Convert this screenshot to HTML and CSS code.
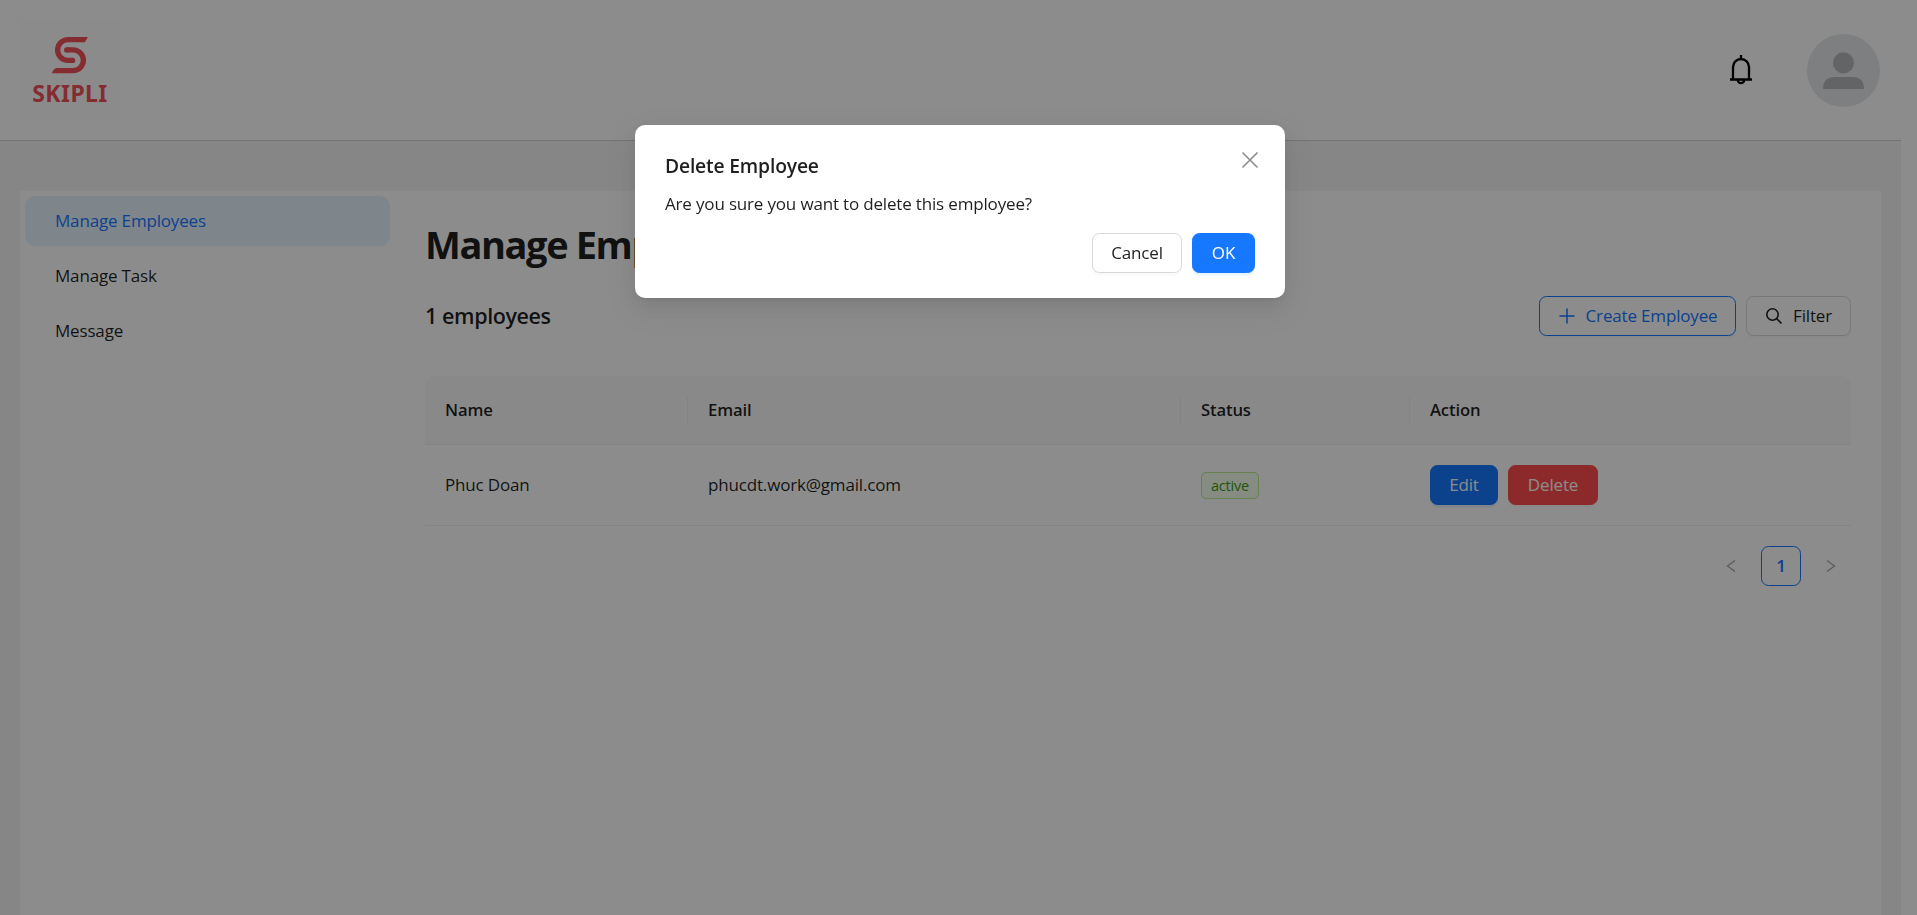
FILE: index.html
```html
<!DOCTYPE html>
<html lang="en">
<head>
<meta charset="utf-8">
<title>Manage Employees</title>
<link rel="stylesheet" href="styles.css">
</head>
<body>
<div class="page">
  <header class="header">
    <div class="logo">
      <svg class="logo-mark" viewBox="0 0 114 112" fill="none">
        <path d="M103 8H51a31.5 31.5 0 0 0 0 63h14M47 39h19a31.5 31.5 0 0 1 0 63H14" stroke="#f05158" stroke-width="16"/>
        <circle cx="65" cy="71" r="8" fill="#f05158"/><circle cx="47" cy="39" r="8" fill="#f05158"/>
        <path d="M94 0h17q-5 14-17 16zM18 94Q6 96 2 110h16z" fill="#f05158"/>
      </svg>
      <span class="logo-text">SKIPLI</span>
    </div>
    <div class="header-tools">
      <svg class="bell" viewBox="0 0 24 32" fill="none" stroke="#000" stroke-width="2.300">
        <path d="M12 1v4M4 25.500V13a8 8 0 0 1 16 0v12.500M1 25.500h22M8.800 26a3.200 3.200 0 0 0 6.400 0"/>
      </svg>
      <svg class="avatar" viewBox="0 0 73 73">
        <circle cx="36.500" cy="36.500" r="36.500" fill="#e3e7ea"/>
        <circle cx="36.500" cy="28.800" r="10.500" fill="#b4b7b9"/>
        <path d="M16 55q0-12 12-12h17q12 0 12 12z" fill="#b4b7b9"/>
      </svg>
    </div>
  </header>
  <main class="main">
    <nav class="nav">
      <a class="nav-item nav-item-active">Manage Employees</a>
      <a class="nav-item">Manage Task</a>
      <a class="nav-item">Message</a>
    </nav>
    <section class="content">
      <h1 class="title">Manage Employees</h1>
      <div class="toolbar">
        <h2 class="count">1 employees</h2>
        <div class="actions">
          <button class="btn btn-outline"><svg class="icon" viewBox="0 0 18 18" fill="none" stroke="currentColor" stroke-width="1.500"><path d="M9 1.500v15M1.500 9h15"/></svg>Create Employee</button>
          <button class="btn"><svg class="icon" viewBox="0 0 18 18" fill="none" stroke="currentColor" stroke-width="1.600"><circle cx="7.500" cy="7.500" r="5.700"/><path d="M11.500 11.500l5 5"/></svg>Filter</button>
        </div>
      </div>
      <div class="table">
        <div class="row head"><div class="cell">Name</div><div class="cell">Email</div><div class="cell">Status</div><div class="cell">Action</div></div>
        <div class="row body"><div class="cell">Phuc Doan</div><div class="cell">phucdt.work@gmail.com</div><div class="cell"><span class="tag">active</span></div><div class="cell cell-actions"><button class="btn btn-primary btn-edit">Edit</button><button class="btn btn-danger">Delete</button></div></div>
      </div>
      <div class="pagination">
        <span class="page-arrow"><svg class="chev" viewBox="0 0 10 14" fill="none" stroke="currentColor" stroke-width="1.300"><path d="M9 1.500L1.500 7 9 12.500"/></svg></span>
        <span class="page-num">1</span>
        <span class="page-arrow"><svg class="chev" viewBox="0 0 10 14" fill="none" stroke="currentColor" stroke-width="1.300"><path d="M1 1.500L8.500 7 1 12.500"/></svg></span>
      </div>
    </section>
  </main>
</div>
<div class="mask">
  <div class="modal">
    <div class="modal-title">Delete Employee</div>
    <div class="modal-body">Are you sure you want to delete this employee?</div>
    <div class="modal-footer"><button class="btn btn-cancel">Cancel</button><button class="btn btn-primary btn-ok">OK</button></div>
    <svg class="close" viewBox="0 0 18 18" fill="none" stroke="#8c8c8c" stroke-width="1.600"><path d="M1.500 1.500l15 15M16.500 1.500l-15 15"/></svg>
  </div>
</div>
</body>
</html>
```
FILE: styles.css
```css
* { box-sizing: border-box; }
body {
  margin: 0;
  height: 915px;
  overflow: hidden;
  background: #fff;
  color: rgba(0, 0, 0, 0.88);
  font: 17px/27.5px "Open Sans", "Noto Sans", sans-serif;
  letter-spacing: -0.17px;
}
.page {
  width: 1901px;
  height: 915px;
  display: flex;
  flex-direction: column;
  background: #f5f5f5;
}
.header {
  height: 141px;
  padding: 20px 21px 20px 20px;
  display: flex;
  justify-content: space-between;
  align-items: center;
  background: #fff;
  border-bottom: 1px solid #d2d2d2;
}
.logo {
  width: 100px;
  height: 100px;
  padding-top: 17px;
  display: flex;
  flex-direction: column;
  align-items: center;
  background: #fdfdfd;
}
.logo-mark { width: 38px; height: 37px; }
.logo-text {
  color: #f05158;
  font: 700 23px/32px "Noto Sans", "Open Sans", sans-serif;
  letter-spacing: 0.4px;
  margin-top: 3px;
}
.header-tools { display: flex; align-items: center; gap: 54px; }
.bell { width: 24px; height: 32px; }
.avatar { width: 73px; height: 73px; }
.main {
  flex: 1;
  margin: 50px 20px 0;
  display: flex;
  background: #fff;
}
.nav {
  width: 375px;
  padding: 5px;
  display: flex;
  flex-direction: column;
  gap: 5px;
}
.nav-item {
  height: 50px;
  padding-left: 30px;
  border-radius: 10px;
  line-height: 50px;
}
.nav-item-active { background: #e6f4ff; color: #1677ff; }
.content { flex: 1; padding: 28px 30px 0; }
.title { margin: 0; font-size: 38px; line-height: 50px; font-weight: 700; letter-spacing: -1.4px; }
.toolbar {
  height: 40px;
  margin: 27px 0 40px;
  display: flex;
  align-items: center;
  justify-content: space-between;
}
.count { margin: 0; font-size: 21.5px; font-weight: 600; letter-spacing: -0.4px; }
.actions { display: flex; gap: 10px; }
.btn {
  height: 40px;
  padding: 0 18px;
  display: flex;
  align-items: center;
  justify-content: center;
  gap: 10px;
  background: #fff;
  color: inherit;
  border: 1px solid #d9d9d9;
  border-radius: 7.5px;
  box-shadow: 0 2.5px 0 rgba(0, 0, 0, 0.02);
  font: inherit;
  letter-spacing: inherit;
  white-space: nowrap;
}
.actions .btn { width: 105px; }
.actions .btn-outline { width: 197px; color: #1677ff; border-color: #1677ff; }
.icon { width: 18px; height: 18px; flex: none; }
.btn-primary {
  background: #1677ff;
  border-color: #1677ff;
  color: #fff;
  box-shadow: 0 2.5px 0 rgba(5, 145, 255, 0.1);
}
.btn-danger { width: 90px; background: #ff4d4f; border-color: #ff4d4f; color: #fff; }
.btn-edit { width: 68px; }
.btn-cancel { width: 90px; }
.btn-ok { width: 63px; }
.row {
  display: grid;
  grid-template-columns: 263px 493px 229px 1fr;
  border-bottom: 1px solid #f0f0f0;
}
.cell { padding: 0 20px; display: flex; align-items: center; }
.head {
  height: 69px;
  background: #fafafa;
  border-radius: 10px 10px 0 0;
  font-size: 16.7px;
  font-weight: 600;
  align-items: center;
}
.head .cell { height: 28px; border-right: 1px solid #f0f0f0; }
.head .cell:last-child { border-right: 0; }
.body { height: 81px; }
.cell-actions { gap: 10px; }
.tag {
  width: 58px;
  height: 27px;
  border: 1px solid #b7eb8f;
  border-radius: 5px;
  background: #f6ffed;
  color: #389e0d;
  font-size: 14.5px;
  line-height: 25px;
  text-align: center;
}
.pagination { margin-top: 20px; display: flex; justify-content: flex-end; gap: 10px; }
.page-arrow, .page-num { width: 40px; height: 40px; display: flex; align-items: center; justify-content: center; }
.page-arrow { color: rgba(0, 0, 0, 0.35); }
.page-num { border: 1px solid #1677ff; border-radius: 7.5px; color: #1677ff; font-weight: 600; }
.chev { width: 10px; height: 14px; }
.mask {
  position: fixed;
  inset: 0;
  padding-top: 125px;
  display: flex;
  justify-content: center;
  align-items: flex-start;
  background: rgba(0, 0, 0, 0.45);
}
.modal {
  position: relative;
  width: 650px;
  height: 173px;
  margin-left: 3px;
  padding: 26px 30px 25px;
  background: #fff;
  border-radius: 10px;
  box-shadow: 0 7.5px 20px rgba(0, 0, 0, 0.08), 0 3.75px 7.5px -5px rgba(0, 0, 0, 0.12), 0 11px 35px 10px rgba(0, 0, 0, 0.05);
}
.modal-title { font-size: 19.3px; line-height: 30px; font-weight: 600; }
.modal-body { margin-top: 9px; }
.modal-footer { margin-top: 15px; display: flex; justify-content: flex-end; gap: 10px; }
.close { position: absolute; top: 26px; right: 26px; width: 18px; height: 18px; }
```
